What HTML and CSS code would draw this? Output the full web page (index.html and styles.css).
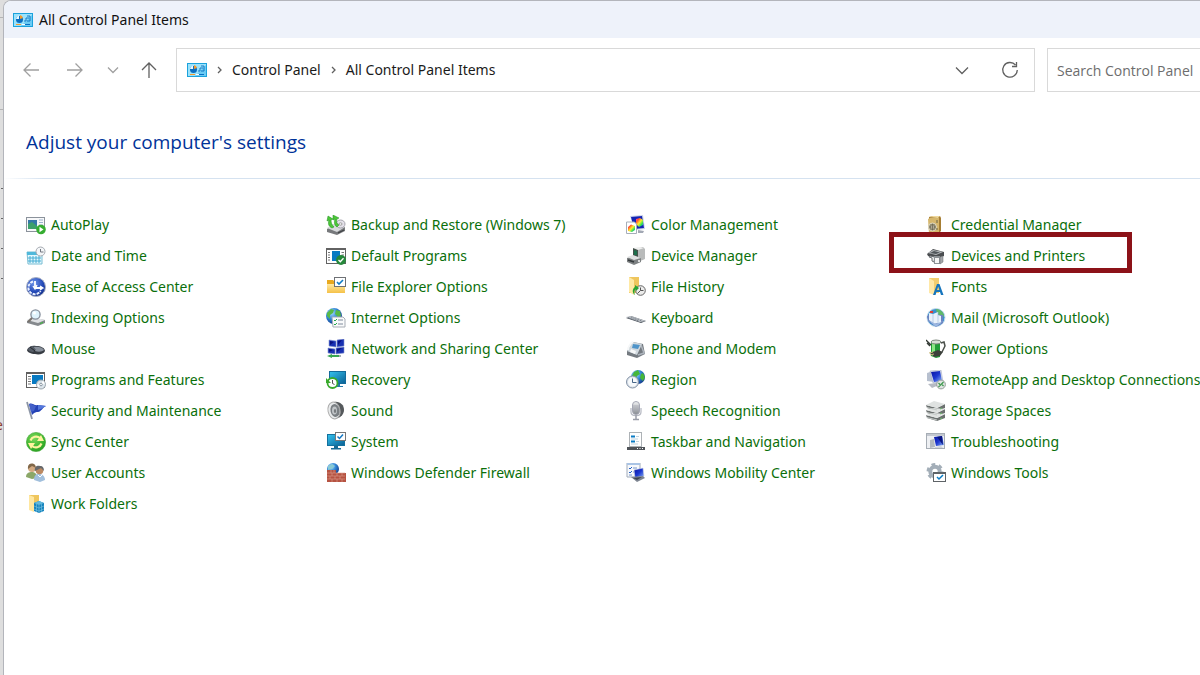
FILE: index.html
```
<!DOCTYPE html>
<html lang="en">

<head>
    <meta charset="utf-8">
    <meta name="viewport" content="width=device-width, initial-scale=1">
    <title>All Control Panel Items</title>

    <link rel="stylesheet" href="styles.css">
</head>

<body>

    <svg class="defs" aria-hidden="true">
        <defs>
            <linearGradient id="screen" x1="0" y1="0" x2="1" y2="1"><stop offset="0" stop-color="#35c3ee"/><stop offset="1" stop-color="#0a5f94"/></linearGradient>
            <linearGradient id="navy" x1="0" y1="0" x2="1" y2="1"><stop offset="0" stop-color="#0712a0"/><stop offset="0.5" stop-color="#1d38d0"/><stop offset="1" stop-color="#8eb6f5"/></linearGradient>
            <linearGradient id="folder" x1="0" y1="0" x2="0" y2="1"><stop offset="0" stop-color="#ffe9a2"/><stop offset="1" stop-color="#f5c148"/></linearGradient>
            <linearGradient id="metal" x1="0" y1="0" x2="0" y2="1"><stop offset="0" stop-color="#f2f3f4"/><stop offset="1" stop-color="#85898f"/></linearGradient>
            <linearGradient id="rainbow" x1="0" y1="0" x2="1" y2="1"><stop offset="0" stop-color="#ff35d0"/><stop offset="0.25" stop-color="#ff5a2c"/><stop offset="0.5" stop-color="#ffee2c"/><stop offset="0.75" stop-color="#31df58"/><stop offset="1" stop-color="#198dff"/></linearGradient>
            <radialGradient id="globe" cx="0.35" cy="0.3" r="0.75"><stop offset="0" stop-color="#a8dcff"/><stop offset="0.5" stop-color="#3287d5"/><stop offset="1" stop-color="#123a8c"/></radialGradient>
            <radialGradient id="ease" cx="0.4" cy="0.3" r="0.8"><stop offset="0" stop-color="#6f95ea"/><stop offset="0.6" stop-color="#2046b5"/><stop offset="1" stop-color="#142c7a"/></radialGradient>
            <radialGradient id="sync" cx="0.4" cy="0.3" r="0.8"><stop offset="0" stop-color="#7cd85c"/><stop offset="0.6" stop-color="#3fb62f"/><stop offset="1" stop-color="#249a22"/></radialGradient>

            <symbol id="panel" viewBox="0 0 20 14">
                <rect x="0.5" y="0.5" width="19" height="13" fill="#9be2fb" stroke="#1ba2dc"/>
                <path d="M1 13h18V2L8 13z" fill="#6bcbf4"/>
                <circle cx="6.5" cy="6.5" r="3.5" fill="#0b6fc2"/>
                <path d="M6 6V2.500A4 4 0 0 0 3 6z" fill="#e8f8ff"/>
                <path d="M7 6V2a4 4 0 0 1 3 3z" fill="#f39a2d"/>
                <path d="M11 8h2V5h3M14 3h3v5h-3" fill="none" stroke="#1478c4"/>
                <path d="M3 11.500h5" stroke="#f39a2d"/>
                <path d="M9 11.500h3" stroke="#fff"/>
                <path d="M12 11.500h5" stroke="#0b6fc2"/>
            </symbol>
        </defs>
    </svg>

    <div class="desktop">
        <div class="behind" aria-hidden="true">
            <span class="line"></span>
            <span class="line line-low"></span>
            <span class="ticks"></span>
            <span class="letter">e</span>
        </div>

        <div class="window">
            <header class="titlebar">
                <svg class="panel-icon"><use href="#panel"/></svg>
                <span>All Control Panel Items</span>
            </header>

            <div class="toolbar">
                <button class="nav" aria-label="Back">
                    <svg width="18" height="18"><path d="M17 9H2M8.500 2.500L2 9l6.500 6.500"/></svg>
                </button>
                <button class="nav" aria-label="Forward">
                    <svg width="18" height="18"><path d="M1 9h15M9.500 2.500L16 9l-6.500 6.500"/></svg>
                </button>
                <button class="nav nav-recent" aria-label="Recent locations">
                    <svg width="18" height="18"><path d="M4 6.500l5 5 5-5"/></svg>
                </button>
                <button class="nav nav-up" aria-label="Up">
                    <svg width="18" height="18"><path d="M9 17V2M2 9l7-7 7 7"/></svg>
                </button>

                <div class="address">
                    <svg class="panel-icon"><use href="#panel"/></svg>
                    <svg class="sep" width="5" height="8"><path d="M1 1l3 3-3 3"/></svg>
                    <a href="#">Control Panel</a>
                    <svg class="sep" width="5" height="8"><path d="M1 1l3 3-3 3"/></svg>
                    <a href="#">All Control Panel Items</a>
                    <button class="address-btn address-more" aria-label="Previous locations">
                        <svg width="18" height="18"><path d="M3 6.500l6 6 6-6"/></svg>
                    </button>
                    <button class="address-btn" aria-label="Refresh">
                        <svg width="18" height="18"><path d="M14.500 4A7.300 7.300 0 1 0 16.300 9M15.500 1v4.500H11"/></svg>
                    </button>
                </div>

                <input class="search" type="text" placeholder="Search Control Panel" aria-label="Search Control Panel">
            </div>

            <main class="content">
                <h1>Adjust your computer's settings</h1>

                <ul class="items">
                    <li><a href="#">
                        <svg class="icon" viewBox="0 0 20 20"><rect x="0.500" y="2.500" width="18" height="14" fill="#f7f8fa" stroke="#8b929b"/><rect x="2" y="5" width="9" height="9" fill="#3478a8"/><path d="M2 14V9l4-2 5 4v3z" fill="#3da06b"/><path d="M13 5h4M13 7.500h4M13 10h4" stroke="#9ab2cb"/><circle cx="15" cy="14.500" r="4.800" fill="#36ad31"/><path d="M13.500 11.800v5.400l4-2.700z" fill="#fff"/></svg>
                        AutoPlay</a></li>
                    <li><a href="#">
                        <svg class="icon" viewBox="0 0 20 20"><path d="M1 14l6-4 12 2v4l-8 4-10-3z" fill="#77797c"/><path d="M1 13l6-4 12 3-8 5z" fill="#d8dadc"/><ellipse cx="14.500" cy="9" rx="4.500" ry="4" fill="#e4e1ea" stroke="#a5a4ad"/><ellipse cx="14.500" cy="9" rx="1.500" ry="1.200" fill="#fff" stroke="#999"/><path d="M6 13C2 11 2 8 3 5L1 6l1-5 5 3-2 1c0 3 1 5 3 7zM11 12C8 10 8 7 9 4L7 5V0l6 3-2 1c-1 3 0 5 2 6z" fill="#4cc738" stroke="#1f8f1c" stroke-width="0.500"/><path d="M12 18l6-3" stroke="#3f4245" stroke-width="1.300"/></svg>
                        Backup and Restore (Windows 7)</a></li>
                    <li><a href="#">
                        <svg class="icon" viewBox="0 0 20 20"><path d="M4 1l13-1 2 14-10 1z" fill="#c9d1e8"/><path d="M5 2l11-1 2 12-10 1z" fill="#1424b4"/><path d="M10 4l4-1 3 2v5l-4 2-3-3z" fill="url(#rainbow)"/><path d="M12 15l6 1-1 2h-5z" fill="#a2a8b4"/><path d="M0.500 7h8l2 2v9.500h-10z" fill="#fff" stroke="#a6aeb9"/><path d="M2 12l3-2.500 4 1.500v4l-3 2-4-1z" fill="url(#rainbow)"/></svg>
                        Color Management</a></li>
                    <li><a href="#">
                        <svg class="icon" viewBox="0 0 20 20"><path d="M3 2l4-1h7l1 2v13l-3 3H3z" fill="#a67e34"/><path d="M2 4l2-1h9v15l-10 1z" fill="#d6b76d"/><path d="M3 2l4-1h7l-2 2z" fill="#f0d99d"/><circle cx="6.500" cy="12" r="4" fill="#8d8870" stroke="#e1dac0"/><circle cx="6.500" cy="12" r="1.500" fill="#e8e2ce"/><path d="M6.500 9v6M3.500 12h6" stroke="#635d4b" stroke-width="0.700"/><path d="M11 5v3M11 13v2" stroke="#6d6546"/></svg>
                        Credential Manager</a></li>

                    <li><a href="#">
                        <svg class="icon" viewBox="0 0 20 20"><path d="M1 6h15v12H2z" fill="#e4f8fd" stroke="#79bdd3"/><path d="M1 6h15v3H1z" fill="#50b9db"/><path d="M4 10v7M7 10v7M10 10v7M13 10v7M2 12h13M2 15h13" stroke="#49aed4"/><circle cx="14.500" cy="5.500" r="4.500" fill="#f4f6f8" stroke="#a4a9b0"/><path d="M14.500 3v3h3" fill="none" stroke="#727780"/></svg>
                        Date and Time</a></li>
                    <li><a href="#">
                        <svg class="icon" viewBox="0 0 20 20"><rect x="0.500" y="2.500" width="19" height="15" fill="#fff" stroke="#626262"/><path d="M0 3h20" stroke="#626262" stroke-width="2"/><rect x="6" y="5" width="8" height="10" fill="#087ac2"/><path d="M2 6.500h2M2 9h2M2 11.500h2M2 14h2M15.500 6.500h2.500M15.500 9h2.500" stroke="#777"/><circle cx="15" cy="14" r="5" fill="#26883b"/><path d="M12.500 14l1.800 1.800 3.200-3.500" stroke="#fff" stroke-width="1.300" fill="none"/></svg>
                        Default Programs</a></li>
                    <li><a href="#">
                        <svg class="icon" viewBox="0 0 20 20"><path d="M12 2l5-1 2 2v10l-7 3z" fill="#b9bbbb"/><path d="M7 2l6-1 5 1-6 2z" fill="#eff0ef"/><path d="M7 2l5 2v9l-5-1z" fill="#45514b"/><path d="M8 4l3 1v4H8z" fill="#1d704c"/><path d="M1 12l6-2 8 2v4l-7 3-7-3z" fill="#7d8182"/><path d="M1 11l6-2 8 3-7 2z" fill="#e0e2e2"/><path d="M2 14l6 2" stroke="#353b3d" stroke-width="1.500"/><circle cx="13" cy="15" r="1" fill="#fff"/></svg>
                        Device Manager</a></li>
                    <li class="highlighted"><a href="#">
                        <svg class="icon" viewBox="0 0 20 20"><path d="M1 8l6-5 11 3v4L8 13l-6-3z" fill="#4a4d50"/><path d="M2 7l5-3 10 2-7 3z" fill="#b4b8bb"/><path d="M4 7l4-2 6 1.500-4 1.500z" fill="#50565a"/><path d="M4 10l5 1-1 5-2-1v-3l-3-1z" fill="#e6e8e9" stroke="#6c7074"/><rect x="8" y="10" width="6" height="8" fill="#8d9296"/><path d="M9 12h4v5H9z" fill="#f5f5f5"/><path d="M14 11l3-1v6l-3 2z" fill="#a4a7aa" stroke="#676a6e" stroke-width="0.500"/></svg>
                        Devices and Printers</a></li>

                    <li><a href="#">
                        <svg class="icon" viewBox="0 0 20 20"><circle cx="10" cy="10" r="9.500" fill="url(#ease)" stroke="#a8b0c3"/><path d="M7 4.500A6.500 6.500 0 1 0 14.500 14" fill="none" stroke="#e8efff" stroke-width="2" stroke-dasharray="3 1"/><path d="M9 4v7h7" fill="none" stroke="#fff" stroke-width="1.800"/><path d="M11 8l-2 4-2-3M14 9l3 2-3 2" fill="none" stroke="#fff" stroke-width="1.300"/></svg>
                        Ease of Access Center</a></li>
                    <li><a href="#">
                        <svg class="icon" viewBox="0 0 20 20"><path d="M1 3h6l2 2h9v11H1z" fill="#e9a91e"/><path d="M1 7h18v9H1z" fill="url(#folder)"/><rect x="8.500" y="0.500" width="11" height="9" fill="#fff" stroke="#6e7175"/><path d="M11 5l2 2 4-4" fill="none" stroke="#117cc5" stroke-width="1.600"/></svg>
                        File Explorer Options</a></li>
                    <li><a href="#">
                        <svg class="icon" viewBox="0 0 20 20"><path d="M3 0h10v16H3z" fill="#efc65e"/><path d="M3 0l5 3v15l-5-3z" fill="#ffe9a4"/><circle cx="14.500" cy="13.500" r="4.800" fill="#ececeb" stroke="#666"/><path d="M14.500 10.500v3h3M11.500 16.500l3-3" stroke="#555" fill="none"/><path d="M9 18c-3-2-3-6 0-8V8l4 3-3 3v-2c-2 1-2 4-1 6z" fill="#28a532"/></svg>
                        File History</a></li>
                    <li><a href="#">
                        <svg class="icon" viewBox="0 0 20 20"><path d="M3 1h10v15H3z" fill="#f3ce70"/><path d="M3 1l5 3v14l-5-2z" fill="#ffe8a7"/><path d="M7 18l4-11h2.500l4 11h-2.500l-1-3h-3.500l-1 3zM11 13h2.300L12.200 9.500z" fill="#1675bd"/></svg>
                        Fonts</a></li>

                    <li><a href="#">
                        <svg class="icon" viewBox="0 0 20 20"><path d="M1 13l5-3 13 2v3l-7 3-11-3z" fill="#85898d"/><path d="M1 12l5-3 13 3-7 3z" fill="#dfe1e4"/><circle cx="9.500" cy="6.500" r="4.600" fill="#dff3fc" stroke="#858d9a" stroke-width="1.300"/><path d="M6 10L2 14" stroke="#77716b" stroke-width="2"/><circle cx="8.500" cy="5" r="1.500" fill="#fff"/><path d="M14 15.500l3-1" stroke="#37c136"/></svg>
                        Indexing Options</a></li>
                    <li><a href="#">
                        <svg class="icon" viewBox="0 0 20 20"><circle cx="8" cy="8" r="8" fill="url(#globe)"/><path d="M1 5l4-4 3 1-1 3-3 2v4l-3-3zM10 2l4 1 1 5-3 1-3-3z" fill="#58b947"/><path d="M6 9h11l2 2v8H7z" fill="#f9fafb" stroke="#a7adb5"/><path d="M8 12l1 1 2-2M8 16l1 1 2-2" stroke="#27a54b" fill="none"/><path d="M12 12h5M12 16h5" stroke="#7f8a9b"/></svg>
                        Internet Options</a></li>
                    <li><a href="#">
                        <svg class="icon" viewBox="0 0 20 20"><path d="M0 10l5-2 15 5-5 2z" fill="#4c535c"/><path d="M0 9l5-1 15 5-6 1z" fill="#bfc4c9"/><path d="M2 9.500l11 3.500M5 9l11 4" stroke="#7d848e" stroke-dasharray="1.500 0.800"/></svg>
                        Keyboard</a></li>
                    <li><a href="#">
                        <svg class="icon" viewBox="0 0 20 20"><circle cx="10" cy="9.500" r="9" fill="#3c8ecd" stroke="#c5dceb"/><path d="M10 1c5 0 8 4 8 7l-3 3-4-5z" fill="#61ba66"/><path d="M1 8l3-2 13 1v8l-7 4-8-6z" fill="#6b83c0"/><path d="M3 5l4 1v9l-4-3zM7 6l5-2v11l-5 1zM12 7l3 1v7l-3 1z" fill="#e9f2fb"/><path d="M4 3h3v2H4z" fill="#dc4034"/><path d="M7 6v9M12 4v11" stroke="#9cb4d6" stroke-width="0.600"/><path d="M2 12l8 4 7-3-7 6z" fill="#9bb8e1"/></svg>
                        Mail (Microsoft Outlook)</a></li>

                    <li><a href="#">
                        <svg class="icon" viewBox="0 0 20 20"><path d="M1 11c1-3 5-5 9-4 5 0 9 2 9 5-1 3-6 4-10 3-4 0-8-2-8-4z" fill="#373c43"/><path d="M7 8c4-1 10 0 11 3-2 2-6 2-9 1z" fill="#88909b"/><path d="M2 10c1-2 3-3 5-3l3 4-3 2c-2 0-5-1-5-3z" fill="#565d67"/><path d="M4 8l5 4" stroke="#15191e" stroke-width="0.800"/></svg>
                        Mouse</a></li>
                    <li><a href="#">
                        <svg class="icon" viewBox="0 0 20 20"><path d="M3 1l7 1v6l-7-1zM11 1l7-1v7l-7 1zM2 9l7 1v5l-7-1zM10 9l8-1v6l-8 1z" fill="#1830b2" stroke="#8594cc" stroke-width="0.600"/><path d="M4 2l4 1-4 3zM12 2l4-1-4 5zM3 10l4 1-4 2zM11 10l5-1-5 4z" fill="#081182"/><path d="M4 16h11v2H4z" fill="#a8aeb4"/><path d="M1 17l5-2v1h7v2H6v1z" fill="#39a653"/></svg>
                        Network and Sharing Center</a></li>
                    <li><a href="#">
                        <svg class="icon" viewBox="0 0 20 20"><path d="M1 12l6-9 10 2 2 10-8 4-10-3z" fill="#747a80"/><path d="M1 12l6-9 9 2-5 11z" fill="#d0d8de"/><path d="M7 5l7 1-2 4-6-1z" fill="#4f94c9"/><path d="M5 10l5 2-1 3-5-2z" fill="#f5f7f8"/><path d="M2 11c0-3 3-7 5-8" fill="none" stroke="#f5f7f8" stroke-width="2"/><path d="M15 6l3 8-6 2" fill="none" stroke="#aeb5bd" stroke-width="1.500"/></svg>
                        Phone and Modem</a></li>
                    <li><a href="#">
                        <svg class="icon" viewBox="0 0 20 20"><path d="M5 3h9v15l-4 1-5-2z" fill="#209d37"/><path d="M6 4h3v14l-3-1z" fill="#8ae784"/><ellipse cx="10" cy="3" rx="5" ry="2" fill="#d7dfd6" stroke="#7c867c"/><path d="M0 1l5 5M1 4l3 3" stroke="#343a35" stroke-width="1.300"/><path d="M15 4l3-1 1 4-3 6" fill="none" stroke="#4b504b" stroke-width="1.500"/><path d="M4 14l8-3 5 2-3 4-6 1z" fill="#3c403b"/><path d="M3 14l4-1M4 16l4-1" stroke="#c8b877"/></svg>
                        Power Options</a></li>

                    <li><a href="#">
                        <svg class="icon" viewBox="0 0 20 20"><rect x="0.500" y="2.500" width="18" height="15" fill="#fff" stroke="#606060"/><path d="M0 3h19" stroke="#606060" stroke-width="2"/><path d="M2 6.500h3M2 9h3M2 11.500h3M2 14h3" stroke="#777"/><rect x="6" y="5" width="11" height="9" fill="#087ac2"/><circle cx="15" cy="14.500" r="4.500" fill="#dce5eb" stroke="#9da7ae"/><path d="M15 14.500l2-4 2 3zM15 14.500l-3 3-1-3z" fill="#fff"/><circle cx="15" cy="14.500" r="1.300" fill="#fff" stroke="#8c99a4"/></svg>
                        Programs and Features</a></li>
                    <li><a href="#">
                        <svg class="icon" viewBox="0 0 20 20"><rect x="3.500" y="1.500" width="16" height="12" fill="url(#screen)" stroke="#146b9b"/><path d="M10 14h4v2h3v1H8v-1h2z" fill="#257aa9"/><circle cx="6.500" cy="13" r="5" fill="#fff" stroke="#3aaa2d" stroke-width="1.800"/><path d="M0 8v5h5z" fill="#3aaa2d"/><path d="M6.500 10v3.500l2 1" stroke="#555" fill="none"/></svg>
                        Recovery</a></li>
                    <li><a href="#">
                        <svg class="icon" viewBox="0 0 20 20"><circle cx="12" cy="7" r="7" fill="url(#globe)"/><path d="M8 2l4-2 2 4-3 2-1 2-4-2zM15 4l2-1 2 4-2 4-3-3z" fill="#46b63a"/><circle cx="6.500" cy="12" r="6" fill="#dce2ea" stroke="#8493a6"/><circle cx="6.500" cy="12" r="4.500" fill="#f7fafc"/><path d="M6.500 8.500v4h4" fill="none" stroke="#496789"/></svg>
                        Region</a></li>
                    <li><a href="#">
                        <svg class="icon" viewBox="0 0 20 20"><path d="M1 3l3-1 4 1v9l-7-1z" fill="#b7c0cf"/><path d="M4 1l11-1 2 12-10 1z" fill="#d7dded" stroke="#9aa3b8" stroke-width="0.500"/><path d="M5 2l9-1 2 10-8 1z" fill="url(#navy)"/><path d="M2 14l8-1 3 2-7 3z" fill="#b5bac3"/><circle cx="15" cy="14.500" r="4.400" fill="#e0e4e2" stroke="#979e9b"/><path d="M12.500 13l2 2-2 2M17.500 12l-2 2 2 2" fill="none" stroke="#399748" stroke-width="1.200"/></svg>
                        RemoteApp and Desktop Connections</a></li>

                    <li><a href="#">
                        <svg class="icon" viewBox="0 0 20 20"><path d="M1 1l5 17" stroke="#8c95a5" stroke-width="1.800"/><path d="M3 3c3-2 5 2 9 1l8 1c-3 1-5 6-8 6-2 0-3 0-6 3z" fill="#2442b6"/><path d="M3 3c3-1 4 2 7 2l-2 5-3 1z" fill="#4460c8"/><path d="M12 4l8 1-5 3-3 1z" fill="#5578dc"/></svg>
                        Security and Maintenance</a></li>
                    <li><a href="#">
                        <svg class="icon" viewBox="0 0 20 20"><path d="M8 1c6-1 10 3 10 8 0 4-3 7-6 8l-5 1z" fill="#55595c"/><ellipse cx="8" cy="9.500" rx="6" ry="8.500" transform="rotate(-12 8 9.500)" fill="#e8eaeb" stroke="#aaa"/><ellipse cx="9" cy="9.500" rx="4.500" ry="6.500" transform="rotate(-12 9 9.500)" fill="#7a7f83"/><ellipse cx="8.500" cy="9.500" rx="2.500" ry="4" fill="#c0c4c7"/><ellipse cx="9" cy="10" rx="1.200" ry="2" fill="#777b7e"/></svg>
                        Sound</a></li>
                    <li><a href="#">
                        <svg class="icon" viewBox="0 0 20 20"><path d="M5 7v4c0 5 10 5 10 0V7" fill="none" stroke="#b4b7c1" stroke-width="1.200"/><rect x="6.500" y="0.500" width="7" height="13" rx="3.500" fill="url(#metal)" stroke="#a5a7b4"/><path d="M7 5h6M7 7h6M7 9h6" stroke="#a2a4b0" stroke-width="0.700"/><path d="M10 14v4M7 18.500h6" stroke="#9a9da8" stroke-width="1.500"/></svg>
                        Speech Recognition</a></li>
                    <li><a href="#">
                        <svg class="icon" viewBox="0 0 20 20"><path d="M0 14l11 3 8-4v4l-8 3-10-3zM0 9l11 3 8-4v4l-8 3-10-3zM0 4l11 3 8-4v4l-8 3-10-3z" fill="#6c7170"/><path d="M0 14l8-2 11 1-8 4zM0 9l8-2 11 1-8 4zM0 4l8-4 11 3-8 4z" fill="#dfe2e1"/><path d="M1 6.500l10 2.500M1 11.500l10 2.500M1 16.500l10 2.500" stroke="#c5cac8"/><path d="M14 8l2-1M14 13l2-1M14 18l2-1" stroke="#67b866"/></svg>
                        Storage Spaces</a></li>

                    <li><a href="#">
                        <svg class="icon" viewBox="0 0 20 20"><circle cx="10" cy="10" r="9.600" fill="url(#sync)" stroke="#3da52f" stroke-width="0.600"/><path d="M4.500 8.500A6 6 0 0 1 14 6M15.500 11.500A6 6 0 0 1 6 14" fill="none" stroke="#fff3a0" stroke-width="2.200"/><path d="M11 9h7l-3-6zM9 11H2l3 6z" fill="#fff3a0"/></svg>
                        Sync Center</a></li>
                    <li><a href="#">
                        <svg class="icon" viewBox="0 0 20 20"><rect x="1.500" y="2.500" width="17" height="11" fill="url(#screen)" stroke="#14719e"/><path d="M8 14h4v2h3v1.500H5V16h3z" fill="#176994"/><rect x="9.500" y="0.500" width="10" height="8" fill="#fff" stroke="#777"/><path d="M11.500 4.500l2 2 3.500-4" fill="none" stroke="#1678c3" stroke-width="1.500"/></svg>
                        System</a></li>
                    <li><a href="#">
                        <svg class="icon" viewBox="0 0 20 20"><rect x="3.500" y="0.500" width="12" height="14" fill="#fff" stroke="#adb2b6"/><path d="M5 4.500h4M5 9.500h4" stroke="#087bc4" stroke-width="2"/><path d="M10 4.500h3M5 7h7M10 9.500h3M5 12h7" stroke="#c0d3df"/><rect x="1" y="15" width="18" height="3" fill="#4f5358"/><path d="M11 16.500h1M13.500 16.500h1M16 16.500h1" stroke="#fff"/></svg>
                        Taskbar and Navigation</a></li>
                    <li><a href="#">
                        <svg class="icon" viewBox="0 0 20 20"><rect x="0.500" y="1.500" width="18" height="15" fill="#eef0f3" stroke="#a6adb5"/><path d="M1 3h17" stroke="#c3c8d0" stroke-width="2"/><path d="M8 5l8-1 2 9-8 1z" fill="url(#navy)"/><path d="M11 5l5-1 1 9z" fill="#091580"/><path d="M4 8l4-1 1 8-5 1z" fill="#b1b8bf"/><path d="M9 15l6-1 2 2H9z" fill="#cfd4d9"/></svg>
                        Troubleshooting</a></li>

                    <li><a href="#">
                        <svg class="icon" viewBox="0 0 20 20"><path d="M0 14c0-4 3-5 6-5s5 2 5 6l-5 1z" fill="#8ba768"/><circle cx="6" cy="5" r="4" fill="#d3a981"/><path d="M2 6C1 1 6-1 9 2l1 3-4-2z" fill="#80684a"/><path d="M8 17c0-5 2-6 5-6s6 2 6 6l-5 2z" fill="#a1bfdc"/><circle cx="13.500" cy="7.500" r="3.800" fill="#bb8962"/><path d="M9 8c-1-4 2-6 5-5 3 0 4 2 4 5l-3-3z" fill="#66686b"/><path d="M12 12l2 2 2-2" stroke="#fff" fill="none"/></svg>
                        User Accounts</a></li>
                    <li><a href="#">
                        <svg class="icon" viewBox="0 0 20 20"><circle cx="7" cy="6" r="6" fill="url(#globe)"/><path d="M2 3l4-2 3 2-3 3-4 1z" fill="#89c9d3"/><path d="M1 7h9v3h10v9H1z" fill="#b65342"/><path d="M1 10h18M1 13h18M1 16h18M5 7v3M8 7v3M6 10v3M11 10v3M16 10v3M4 13v3M9 13v3M14 13v3M6 16v3M11 16v3M16 16v3" stroke="#dda08e" stroke-width="0.600"/></svg>
                        Windows Defender Firewall</a></li>
                    <li><a href="#">
                        <svg class="icon" viewBox="0 0 20 20"><path d="M1 0h13v14H1z" fill="#f7f9fc" stroke="#a0abba"/><path d="M1 1h13" stroke="#aac4e5" stroke-width="2"/><path d="M3 5l1 1 2-2M3 9l1 1 2-2" fill="none" stroke="#235fc6"/><path d="M7 5h4M7 9h2M3 12h3" stroke="#7594c8"/><path d="M8 7l9-2 1 8-9 2z" fill="url(#navy)" stroke="#d2d8e6" stroke-width="0.600"/><path d="M5 14l12-1 2 2-8 4z" fill="#7d8490"/><path d="M7 15l9-1-5 3z" fill="#3c4350"/></svg>
                        Windows Mobility Center</a></li>
                    <li><a href="#">
                        <svg class="icon" viewBox="0 0 20 20"><circle cx="9" cy="8.500" r="4.700" fill="none" stroke="#a3aeb8" stroke-width="4"/><circle cx="9" cy="8.500" r="7.200" fill="none" stroke="#a3aeb8" stroke-width="2.500" stroke-dasharray="3.770 3.770"/><rect x="7.500" y="9.500" width="12" height="9" fill="#fff" stroke="#5e6367"/><path d="M7 10.500h13" stroke="#5e6367"/><path d="M11 14l2 2 4-4" fill="none" stroke="#087bc4" stroke-width="1.500"/></svg>
                        Windows Tools</a></li>

                    <li><a href="#">
                        <svg class="icon" viewBox="0 0 20 20"><path d="M3 1h10v15H3z" fill="#efc65e"/><path d="M3 1l5 2v15l-5-2z" fill="#ffe7a0"/><path d="M8 9l5-2 5 2v8l-5 2-5-2z" fill="#1683bd"/><path d="M8 9l5-2 5 2-5 2z" fill="#62b8dc"/><path d="M13 11v8M8 12l5 2 5-2M8 15l5 2 5-2M10.500 10v8M15.500 10v8" stroke="#79c4e3" stroke-width="0.600" fill="none"/></svg>
                        Work Folders</a></li>
                </ul>
            </main>
        </div>
    </div>

</body>

</html>
```
FILE: styles.css
```
*,
*::after {
    box-sizing: border-box;
}

body {
    margin: 0;
    background: #dedede;
    color: #1b1b1b;
    font-family: "Noto Sans", "Open Sans", sans-serif;
    font-size: 14px;
    line-height: 20px;
}

button,
input {
    font: inherit;
}

a {
    color: inherit;
    text-decoration: none;
}

.defs {
    position: absolute;
    width: 0;
    height: 0;
}

.desktop {
    display: flex;
    min-height: 100vh;
    overflow: hidden;
}

/* sliver of the window underneath */
.behind {
    position: relative;
    flex: 0 0 3px;
    overflow: hidden;
}

.line {
    position: absolute;
    top: 17px;
    width: 100%;
    height: 1px;
    background: #b4b4b4;
}

.line-low {
    top: 109px;
}

.ticks {
    position: absolute;
    top: 188px;
    left: 1px;
    width: 2px;
    height: 92px;
    background: repeating-linear-gradient(#666 0 1px, transparent 1px 30px);
}

.letter {
    position: absolute;
    top: 415px;
    right: 0;
    color: #8d4033;
}

.window {
    flex: 1;
    min-width: 0;
    overflow: hidden;
    background: #fff;
    border-top: 1px solid #b3b5bb;
    border-left: 1px solid #b3b5bb;
    border-top-left-radius: 8px;
}

.titlebar {
    display: flex;
    align-items: center;
    gap: 6px;
    height: 37px;
    padding-left: 9px;
    background: #eef2fa;
    color: #111;
}

.panel-icon {
    flex: none;
    width: 20px;
    height: 14px;
}

.toolbar {
    display: flex;
    align-items: center;
    padding: 10px 0 0 5px;
}

.nav,
.address-btn {
    display: flex;
    align-items: center;
    justify-content: center;
    width: 44px;
    height: 44px;
    padding: 0;
    border: 0;
    background: none;
}

.nav svg,
.address-btn svg,
.sep {
    fill: none;
    stroke: #a0a0a0;
    stroke-width: 1.3;
}

.nav-recent {
    width: 32px;
}

.nav-up {
    width: 40px;
}

.nav-up svg,
.address-btn svg,
.sep {
    stroke: #606060;
}

.address {
    display: flex;
    flex: 1;
    align-items: center;
    gap: 10px;
    height: 44px;
    margin: 0 12px 0 7px;
    padding-left: 10px;
    border: 1px solid #d9d9d9;
}

.address-btn {
    width: 48px;
}

.address-more {
    width: 28px;
    margin-left: auto;
}

.search {
    flex: 0 0 153px;
    width: 153px;
    height: 44px;
    padding: 0 0 0 9px;
    border: 1px solid #d9d9d9;
    border-right: 0;
    border-radius: 0;
    background: #fff;
    font-family: "Open Sans", "Noto Sans", sans-serif;
}

.search::placeholder {
    color: #6d6d6d;
    opacity: 1;
}

.content {
    padding-top: 36px;
}

h1 {
    margin: 0;
    padding: 0 22px 22px;
    border-bottom: 1px solid;
    border-image: linear-gradient(to right, transparent, #d5e2f0 40px) 1;
    color: #003399;
    font-family: "Open Sans", "Noto Sans", sans-serif;
    font-size: 19px;
    font-weight: 400;
    line-height: 28px;
}

.items {
    display: grid;
    grid-template-columns: repeat(4, 300px);
    margin: 0;
    padding: 30px 0 0 22px;
    list-style: none;
    color: #0b6f0b;
}

.items li {
    position: relative;
}

.items a {
    display: flex;
    align-items: center;
    gap: 5px;
    height: 31px;
    white-space: nowrap;
}

.icon {
    flex: none;
    width: 20px;
    height: 20px;
}

.highlighted::after {
    content: "";
    position: absolute;
    top: -8px;
    left: -37px;
    width: 243px;
    height: 41px;
    border: 5px solid #8c1218;
    pointer-events: none;
}
```
